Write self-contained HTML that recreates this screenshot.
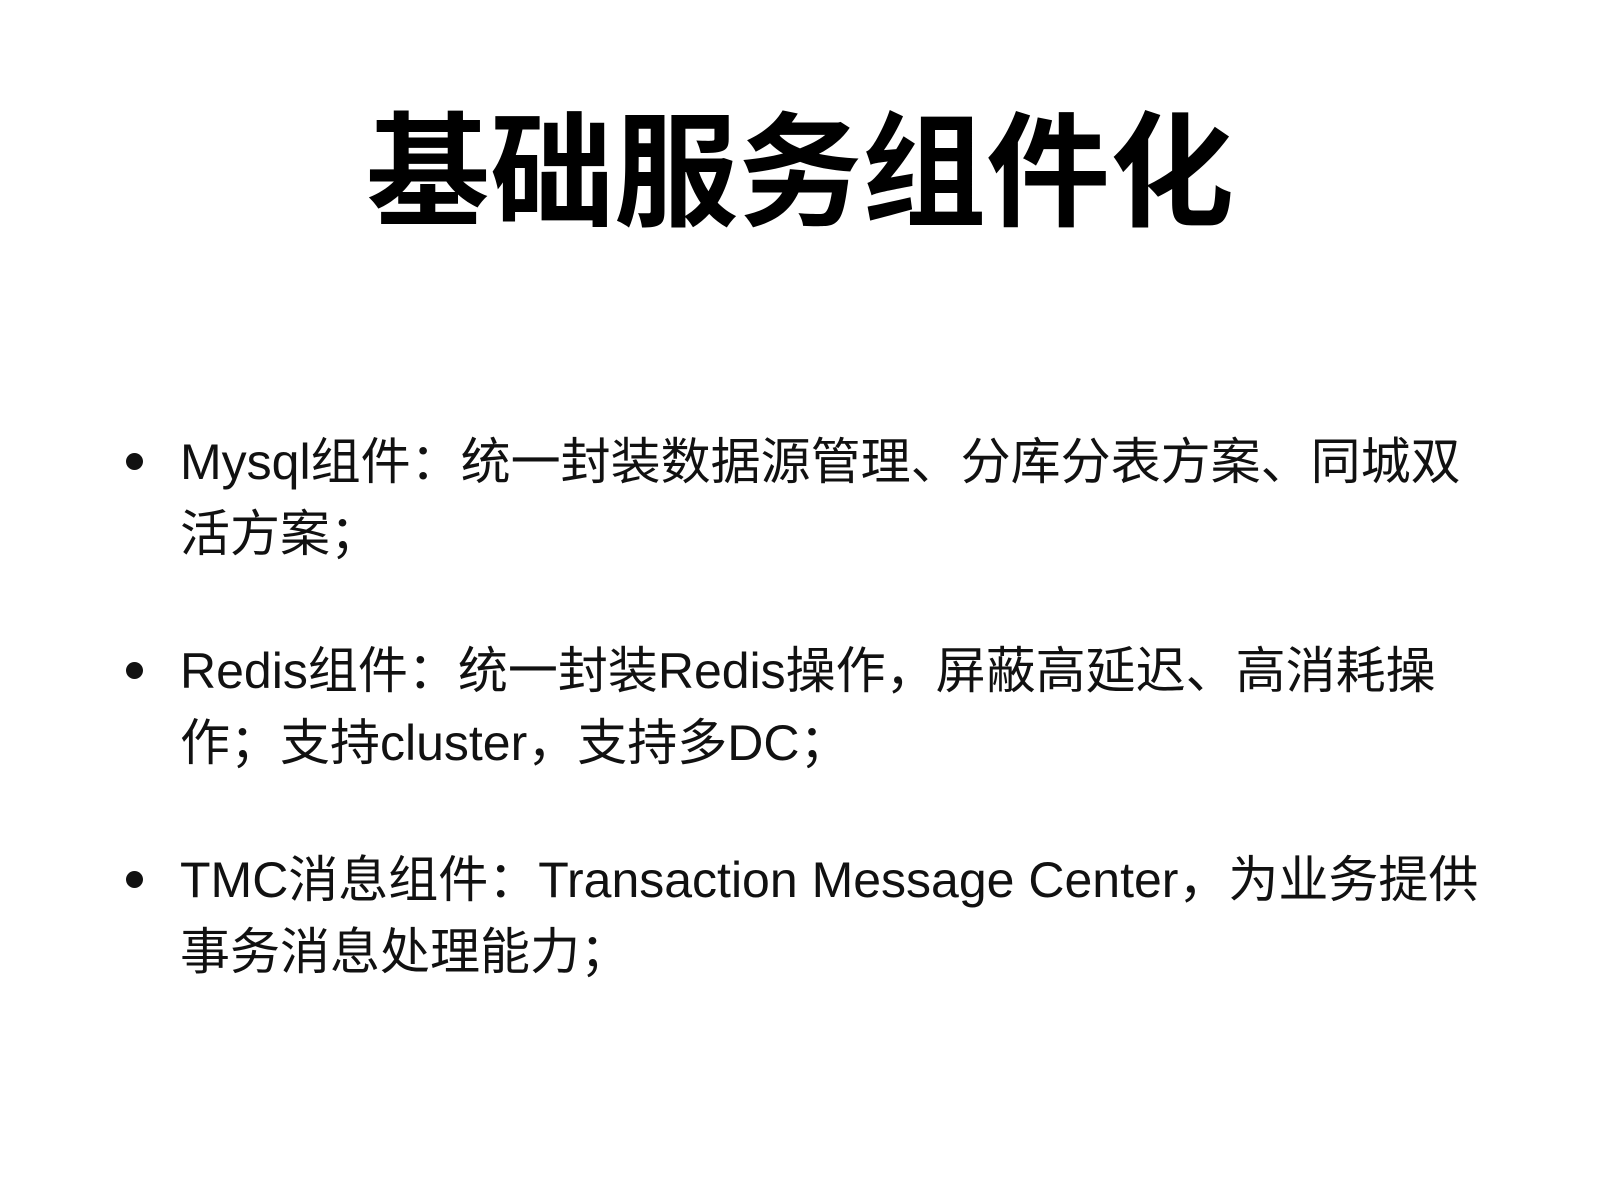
<!DOCTYPE html>
<html><head><meta charset="utf-8"><style>
html,body{margin:0;padding:0;background:#fff;width:1600px;height:1200px;overflow:hidden}
body{font-family:"Liberation Sans","Noto Sans CJK SC",sans-serif;color:#111;position:relative}
.t{position:absolute;left:0;width:1600px;top:162px;text-align:center;font-family:"Noto Sans CJK SC","Liberation Sans",sans-serif;font-weight:bold;font-size:124px;line-height:124px;margin-top:-62px;color:#000;letter-spacing:0}
.b{position:absolute;left:180px;font-size:50px;line-height:72px;white-space:nowrap;color:#111}
.d{position:absolute;left:-54px;top:27px;width:17px;height:17px;border-radius:50%;background:#111}
</style></head><body>
<div class="t">基础服务组件化</div>
<div class="b" style="top:426px"><span class="d"></span>Mysql组件：统一封装数据源管理、分库分表方案、同城双<br>活方案；</div>
<div class="b" style="top:635px"><span class="d"></span>Redis组件：统一封装Redis操作，屏蔽高延迟、高消耗操<br>作；支持cluster，支持多DC；</div>
<div class="b" style="top:844px"><span class="d"></span>TMC消息组件：Transaction Message Center，为业务提供<br>事务消息处理能力；</div>
</body></html>
